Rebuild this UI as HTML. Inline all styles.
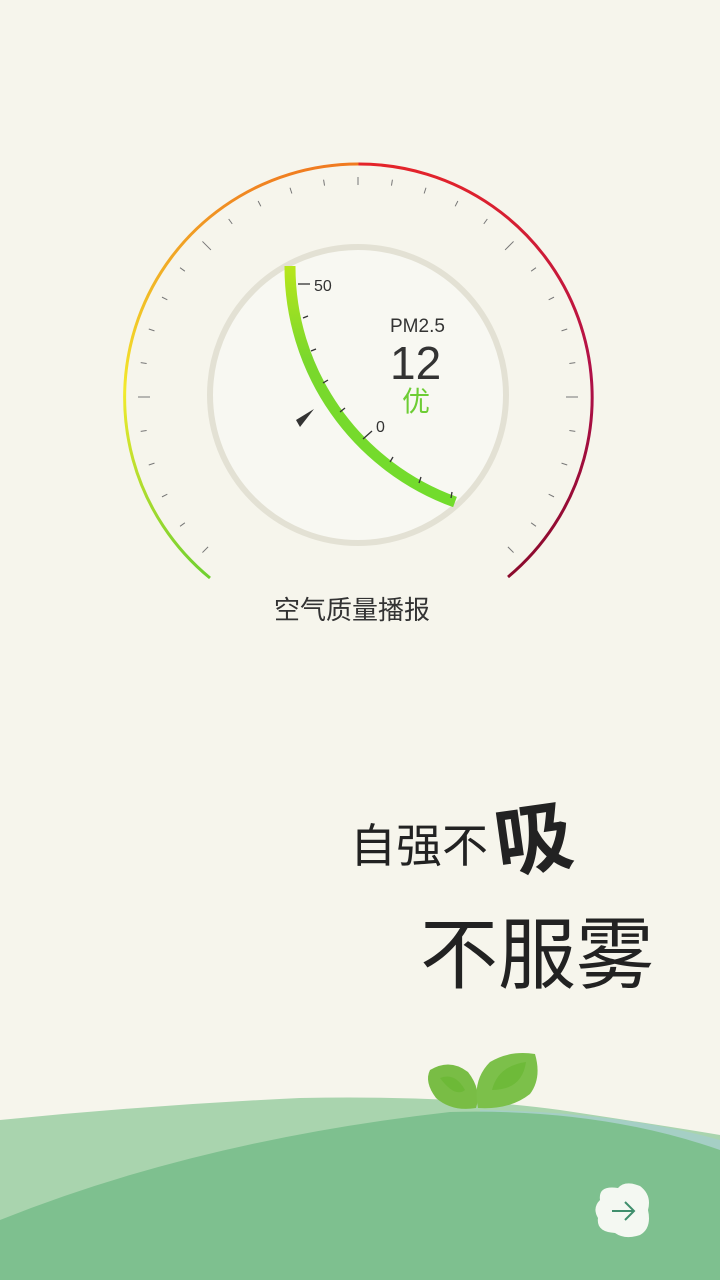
<!DOCTYPE html>
<html><head><meta charset="utf-8"><style>
body{margin:0;width:720px;height:1280px;overflow:hidden;background:#f6f5ec;position:relative;font-family:"Liberation Sans","Noto Sans CJK SC",sans-serif}
.t{position:absolute;color:#222;white-space:nowrap}
</style></head><body>
<svg width="720" height="1280" style="position:absolute;left:0;top:0">
<defs>
<linearGradient id="gl" x1="0" y1="578" x2="0" y2="164" gradientUnits="userSpaceOnUse">
<stop offset="0" stop-color="#6fd030"/><stop offset="0.45" stop-color="#f2ea2c"/><stop offset="1" stop-color="#f07a20"/></linearGradient>
<linearGradient id="gr" x1="0" y1="164" x2="0" y2="578" gradientUnits="userSpaceOnUse">
<stop offset="0" stop-color="#e4242a"/><stop offset="0.5" stop-color="#b01048"/><stop offset="1" stop-color="#8a0a2c"/></linearGradient>
<linearGradient id="gg" x1="0" y1="265" x2="0" y2="500" gradientUnits="userSpaceOnUse">
<stop offset="0" stop-color="#b8e61c"/><stop offset="0.4" stop-color="#7ad82c"/><stop offset="1" stop-color="#72dc2c"/></linearGradient>
</defs>
<path d="M210 578 A233.5 233.5 0 0 1 358.5 164" fill="none" stroke="url(#gl)" stroke-width="3"/>
<path d="M358.5 164 A233.5 233.5 0 0 1 508 577" fill="none" stroke="url(#gr)" stroke-width="3"/>
<g stroke="#777" stroke-width="1">
<line x1="358" y1="177" x2="358" y2="185" transform="rotate(-135 358 397)"/>
<line x1="358" y1="177" x2="358" y2="183" transform="rotate(-126 358 397)"/>
<line x1="358" y1="177" x2="358" y2="183" transform="rotate(-117 358 397)"/>
<line x1="358" y1="177" x2="358" y2="183" transform="rotate(-108 358 397)"/>
<line x1="358" y1="177" x2="358" y2="183" transform="rotate(-99 358 397)"/>
<line x1="358" y1="177" x2="358" y2="189" transform="rotate(-90 358 397)"/>
<line x1="358" y1="177" x2="358" y2="183" transform="rotate(-81 358 397)"/>
<line x1="358" y1="177" x2="358" y2="183" transform="rotate(-72 358 397)"/>
<line x1="358" y1="177" x2="358" y2="183" transform="rotate(-63 358 397)"/>
<line x1="358" y1="177" x2="358" y2="183" transform="rotate(-54 358 397)"/>
<line x1="358" y1="177" x2="358" y2="189" transform="rotate(-45 358 397)"/>
<line x1="358" y1="177" x2="358" y2="183" transform="rotate(-36 358 397)"/>
<line x1="358" y1="177" x2="358" y2="183" transform="rotate(-27 358 397)"/>
<line x1="358" y1="177" x2="358" y2="183" transform="rotate(-18 358 397)"/>
<line x1="358" y1="177" x2="358" y2="183" transform="rotate(-9 358 397)"/>
<line x1="358" y1="177" x2="358" y2="185" transform="rotate(0 358 397)"/>
<line x1="358" y1="177" x2="358" y2="183" transform="rotate(9 358 397)"/>
<line x1="358" y1="177" x2="358" y2="183" transform="rotate(18 358 397)"/>
<line x1="358" y1="177" x2="358" y2="183" transform="rotate(27 358 397)"/>
<line x1="358" y1="177" x2="358" y2="183" transform="rotate(36 358 397)"/>
<line x1="358" y1="177" x2="358" y2="189" transform="rotate(45 358 397)"/>
<line x1="358" y1="177" x2="358" y2="183" transform="rotate(54 358 397)"/>
<line x1="358" y1="177" x2="358" y2="183" transform="rotate(63 358 397)"/>
<line x1="358" y1="177" x2="358" y2="183" transform="rotate(72 358 397)"/>
<line x1="358" y1="177" x2="358" y2="183" transform="rotate(81 358 397)"/>
<line x1="358" y1="177" x2="358" y2="189" transform="rotate(90 358 397)"/>
<line x1="358" y1="177" x2="358" y2="183" transform="rotate(99 358 397)"/>
<line x1="358" y1="177" x2="358" y2="183" transform="rotate(108 358 397)"/>
<line x1="358" y1="177" x2="358" y2="183" transform="rotate(117 358 397)"/>
<line x1="358" y1="177" x2="358" y2="183" transform="rotate(126 358 397)"/>
<line x1="358" y1="177" x2="358" y2="185" transform="rotate(135 358 397)"/>
</g>
<circle cx="358" cy="395" r="148" fill="#f8f8f2" stroke="#e3e1d4" stroke-width="6"/>
<path d="M290 266 A250 250 0 0 0 455 502" fill="none" stroke="url(#gg)" stroke-width="11"/>
<g stroke="#333" stroke-width="1.3">
<line x1="298" y1="284" x2="310" y2="284"/>
<line x1="303" y1="318" x2="308" y2="316"/>
<line x1="311" y1="351" x2="316" y2="349"/>
<line x1="323" y1="383" x2="328" y2="380"/>
<line x1="340" y1="412" x2="345" y2="408"/>
<line x1="363" y1="439" x2="372" y2="431"/>
<line x1="390" y1="462" x2="393" y2="457"/>
<line x1="419" y1="483" x2="421" y2="477"/>
<line x1="451" y1="498" x2="452" y2="492"/>
</g>
<polygon points="314,409 296,420 300,427" fill="#333"/>
<text x="314" y="291" font-size="16" fill="#333" font-family="Liberation Sans">50</text>
<text x="376" y="432" font-size="16" fill="#333" font-family="Liberation Sans">0</text>
<!-- hills -->
<path d="M0 1120 Q150 1105 300 1098 Q450 1095 560 1110 Q660 1125 720 1135 L720 1280 L0 1280Z" fill="#a9d4ae"/>
<path d="M480 1110 Q620 1112 720 1140 L720 1180 Q600 1150 480 1115Z" fill="#a5cfc5"/>
<path d="M0 1220 Q200 1140 450 1112 Q600 1108 720 1150 L720 1280 L0 1280Z" fill="#7ec08f"/>
<!-- leaves -->
<path d="M430 1070 Q450 1058 468 1072 Q482 1090 476 1108 Q452 1112 436 1098 Q424 1082 430 1070Z" fill="#79bd45"/>
<path d="M478 1108 Q472 1080 490 1062 Q510 1050 535 1054 Q542 1078 530 1094 Q510 1110 478 1108Z" fill="#7cc04a"/>
<path d="M440 1078 Q455 1072 465 1090 Q455 1098 440 1078Z" fill="#66b52e" opacity=".6"/>
<path d="M492 1090 Q498 1066 526 1062 Q522 1090 492 1090Z" fill="#66b52e" opacity=".6"/>
<!-- button -->
<path d="M600 1200 Q598 1185 618 1188 Q625 1180 640 1186 Q652 1195 648 1210 Q652 1228 640 1235 Q625 1240 615 1233 Q596 1232 598 1218 Q592 1208 600 1200Z" fill="#f4f8f2"/>
<path d="M612 1211 L634 1211 M625 1202 L634 1211 L625 1220" stroke="#3f8f6d" stroke-width="2" fill="none"/>
</svg>
<div class="t" style="left:390px;top:316px;font-size:19px;color:#333">PM2.5</div>
<div class="t" style="left:390px;top:336px;font-size:46px;color:#333">12</div>
<div class="t" style="left:402px;top:380px;font-size:28px;color:#6dcd34">优</div>
<div class="t" style="left:274px;top:590px;font-size:26px;color:#333">空气质量播报</div>
<div class="t" style="left:350px;top:810px;font-size:46px;color:#222">自强不</div>
<div class="t" style="left:494px;top:778px;font-size:78px;font-weight:bold;transform:rotate(-8deg)">吸</div>
<div class="t" style="left:420px;top:893px;font-size:78px">不服雾</div>
</body></html>
